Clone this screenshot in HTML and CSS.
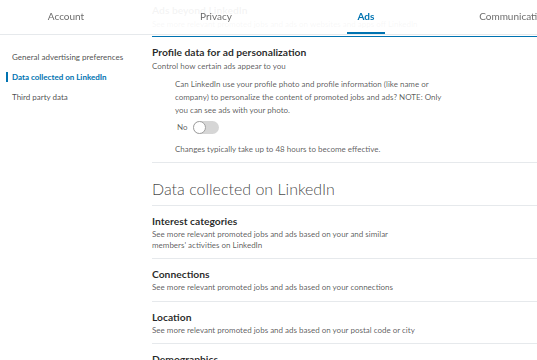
FILE: index.html
```html
<!DOCTYPE html>
<html lang="en">
  <head>
    <meta charset="UTF-8" />
    <meta name="viewport" content="width=device-width, initial-scale=1.0" />
    <title>Ads settings</title>
    <link rel="stylesheet" href="styles.css">
  </head>
  <body>
    <header class="settings-tabs">
      <div class="tab"><span class="tab-label">Account</span></div>
      <div class="tab"><span class="tab-label">Privacy</span></div>
      <div class="tab active"><span class="tab-label">Ads</span></div>
      <div class="tab"><span class="tab-label">Communications</span></div>
    </header>

    <div class="layout">
      <nav class="side-nav">
        <a class="side-link">General advertising preferences</a>
        <a class="side-link active">Data collected on LinkedIn</a>
        <a class="side-link">Third party data</a>
      </nav>

      <main class="settings">
        <section class="setting">
          <h3 class="setting-title">Ads beyond LinkedIn</h3>
          <p class="setting-desc">See more relevant promoted jobs and ads on websites and apps off LinkedIn</p>
        </section>

        <section class="setting expanded">
          <h3 class="setting-title">Profile data for ad personalization</h3>
          <p class="setting-desc">Control how certain ads appear to you</p>
          <div class="setting-body">
            <p class="question">
              Can LinkedIn use your profile photo and profile information (like name or
              company) to personalize the content of promoted jobs and ads? NOTE: Only
              you can see ads with your photo.
            </p>
            <label class="toggle-row">
              <span>No</span>
              <span class="toggle"><span class="toggle-knob"></span></span>
            </label>
            <p class="note">Changes typically take up to 48 hours to become effective.</p>
          </div>
        </section>

        <h2 class="group-title">Data collected on LinkedIn</h2>

        <section class="setting">
          <h3 class="setting-title">Interest categories</h3>
          <p class="setting-desc">See more relevant promoted jobs and ads based on your and similar members' activities on LinkedIn</p>
        </section>

        <section class="setting">
          <h3 class="setting-title">Connections</h3>
          <p class="setting-desc">See more relevant promoted jobs and ads based on your connections</p>
        </section>

        <section class="setting">
          <h3 class="setting-title">Location</h3>
          <p class="setting-desc">See more relevant promoted jobs and ads based on your postal code or city</p>
        </section>

        <section class="setting">
          <h3 class="setting-title">Demographics</h3>
          <p class="setting-desc">See more relevant promoted jobs and ads based on your age and gender</p>
        </section>
      </main>
    </div>
  </body>
</html>
```
FILE: styles.css
```css
* {
  margin: 0;
  padding: 0;
  box-sizing: border-box;
}

body {
  font-family: Lato, "Open Sans", sans-serif;
  background: white;
  color: rgba(0, 0, 0, 0.65);
  overflow: hidden;
}

/* top tab bar sits over the scrolled content */
.settings-tabs {
  position: fixed;
  top: 0;
  left: 0;
  right: 0;
  height: 35px;
  display: flex;
  margin-left: -9px;
  background: rgba(255, 255, 255, 0.95);
  border-bottom: 1px solid #e6e9ec;
  z-index: 2;
}

.tab {
  flex: 0 0 150px;
  text-align: center;
}

.tab-label {
  display: inline-block;
  padding: 0 11px;
  line-height: 32px;
  font-size: 10px;
  color: rgba(0, 0, 0, 0.6);
  border-bottom: 2px solid transparent;
  white-space: nowrap;
}

.tab.active .tab-label {
  color: #0073b1;
  font-weight: 700;
  border-bottom-color: #0073b1;
}

.layout {
  display: flex;
}

.side-nav {
  flex: 0 0 152px;
  padding-top: 47px;
  display: flex;
  flex-direction: column;
}

.side-link {
  display: flex;
  align-items: center;
  padding-left: 6px;
  line-height: 20px;
  font-size: 8px;
  color: rgba(0, 0, 0, 0.72);
}

.side-link::before {
  content: "";
  width: 2px;
  height: 10px;
  margin-right: 4px;
  background: transparent;
}

.side-link.active {
  color: #0073b1;
  font-weight: 700;
}

.side-link.active::before {
  background: #0073b1;
}

.settings {
  flex: 1;
  min-width: 0;
}

.setting {
  padding: 8px 0;
  border-bottom: 1px solid #e6e9ec;
}

.setting:first-child {
  padding: 3px 0 6px;
  border-bottom: none;
}

.setting-title {
  font-size: 10.3px;
  font-weight: 700;
  line-height: 15px;
  color: rgba(0, 0, 0, 0.85);
}

.setting-desc {
  font-size: 8px;
  line-height: 10.5px;
  max-width: 265px;
}

.setting:first-child .setting-desc {
  line-height: 12px;
  max-width: none;
}

.setting.expanded {
  border-top: 1px solid #0073b1;
  padding: 8px 0 7px;
}

.setting.expanded .setting-desc {
  line-height: 12px;
}

.setting-body {
  padding-left: 23px;
  margin-top: 6px;
  font-size: 8px;
}

.question {
  max-width: 278px;
  line-height: 13px;
}

.toggle-row {
  display: flex;
  align-items: center;
  gap: 5px;
  height: 14px;
  margin: 3px 0 0 2px;
}

.toggle {
  display: flex;
  align-items: center;
  width: 26px;
  height: 13px;
  border-radius: 7px;
  background: #d6d6d6;
}

.toggle-knob {
  width: 13px;
  height: 13px;
  border-radius: 50%;
  background: white;
  border: 1px solid #a0a0a0;
}

.note {
  margin-top: 9px;
  line-height: 12px;
}

.group-title {
  font-size: 16px;
  font-weight: 300;
  line-height: 20px;
  color: rgba(0, 0, 0, 0.75);
  padding: 16px 0 6px;
  border-bottom: 1px solid #e6e9ec;
}
```
